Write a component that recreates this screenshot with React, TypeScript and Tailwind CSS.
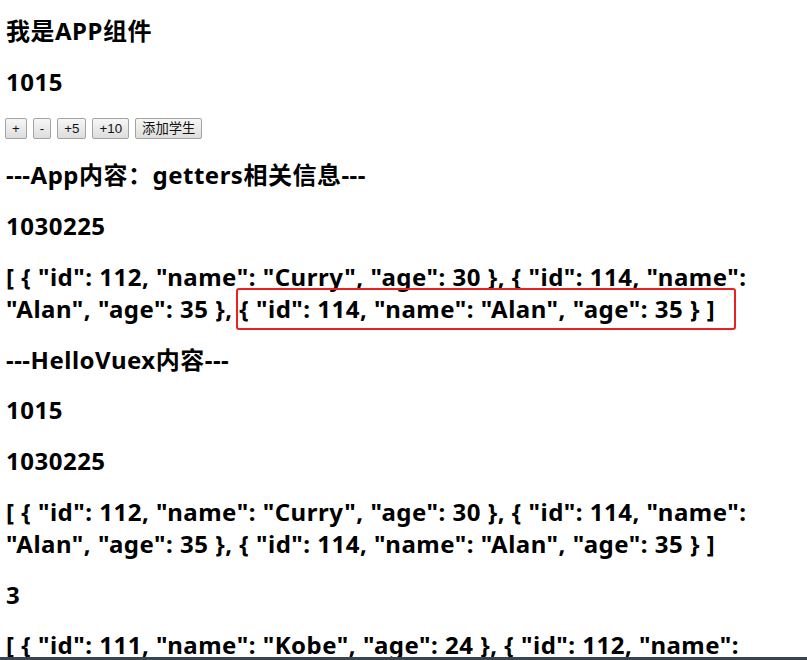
const studentsA = '[ { "id": 112, "name": "Curry", "age": 30 }, { "id": 114, "name":'
const studentsB = '"Alan", "age": 35 }, { "id": 114, "name": "Alan", "age": 35 } ]'
const allA = '[ { "id": 111, "name": "Kobe", "age": 24 }, { "id": 112, "name":'
const allB = '"Curry", "age": 30 }, { "id": 114, "name": "Alan", "age": 35 } ]'

const h2 = 'my-[18.75px] text-[24px] font-bold leading-[32px] tracking-[0.5px] text-black'

function Btn({ label }: { readonly label: string }): React.JSX.Element {
  return (
    <button
      type="button"
      className="h-[21px] rounded-[2px] border border-[#a3a3a3] bg-gradient-to-b from-[#f7f7f7] to-[#dddddd] px-[6px] text-[13.33px] leading-[19px] text-[#111]"
      style={{ fontFamily: '"Liberation Sans", "Noto Sans CJK SC", sans-serif' }}
    >
      {label}
    </button>
  )
}

function Lines({ a, b }: { readonly a: string; readonly b: string }): React.JSX.Element {
  return (
    <h2 className={`${h2} whitespace-nowrap`}>
      {a}
      <br />
      {b}
    </h2>
  )
}

export default function App(): React.JSX.Element {
  return (
    <div
      className="relative h-[660px] overflow-hidden bg-white px-[6px] pt-[15px]"
      style={{ fontFamily: '"Noto Sans", "Noto Sans CJK SC", sans-serif' }}
    >
      <h2 className={`${h2} mt-0`}>我是APP组件</h2>
      <h2 className={h2}>1015</h2>
      <div className="-ml-px flex h-[24px] items-center gap-[6px]">
        <Btn label="+" />
        <Btn label="-" />
        <Btn label="+5" />
        <Btn label="+10" />
        <Btn label="添加学生" />
      </div>
      <h2 className={h2}>---App内容：getters相关信息---</h2>
      <h2 className={h2}>1030225</h2>
      <div className="relative">
        <Lines a={studentsA} b={studentsB} />
        {/* annotation box */}
        <div className="absolute left-[230px] top-[27px] h-[42px] w-[500px] rounded-[3px] border-2 border-[#e8231f]" />
      </div>
      <h2 className={h2}>---HelloVuex内容---</h2>
      <h2 className={h2}>1015</h2>
      <h2 className={h2}>1030225</h2>
      <Lines a={studentsA} b={studentsB} />
      <h2 className={h2}>3</h2>
      <Lines a={allA} b={allB} />
      <div className="absolute bottom-0 left-0 h-[3px] w-full bg-[#3a4550]" />
    </div>
  )
}
